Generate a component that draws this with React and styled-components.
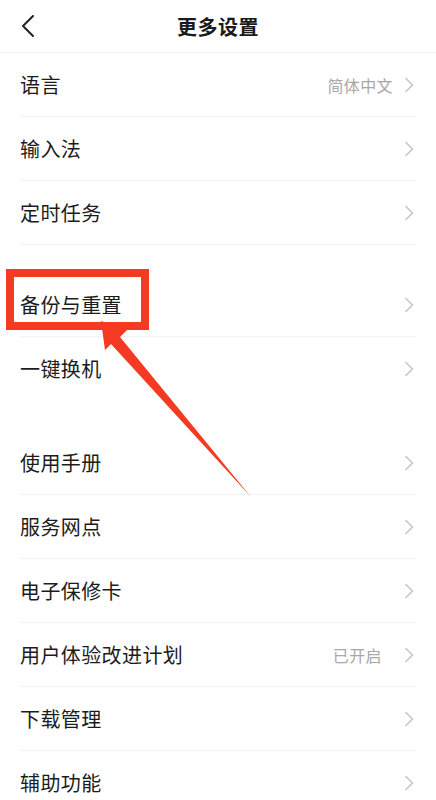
import React from 'react';
import styled, {createGlobalStyle} from "styled-components";

const GlobalStyle = createGlobalStyle`
  html, body {
    margin: 0;
    padding: 0;
    background: #ffffff;
  }
  body {
    font-family: "Noto Sans CJK SC", "Noto Sans", sans-serif;
    -webkit-font-smoothing: antialiased;
  }
`

const groups = [
    [
        {label: '语言', value: '简体中文'},
        {label: '输入法'},
        {label: '定时任务'},
    ],
    [
        {label: '备份与重置', marked: true},
        {label: '一键换机', noLine: true},
    ],
    [
        {label: '使用手册'},
        {label: '服务网点'},
        {label: '电子保修卡'},
        {label: '用户体验改进计划', value: '已开启', valueGap: 22},
        {label: '下载管理'},
        {label: '辅助功能', noLine: true},
    ],
]

const App = () => {
    return (
        <>
            <GlobalStyle/>
            <Page>
                <Header>
                    <BackButton aria-label="back">
                        <svg width="14" height="24" viewBox="0 0 14 24">
                            <path d="M12 2 L2 12 L12 22" fill="none" stroke="#222" strokeWidth="2" strokeLinecap="round" strokeLinejoin="round"/>
                        </svg>
                    </BackButton>
                    <Title>更多设置</Title>
                </Header>
                {groups.map((group, i) => (
                    <Group key={i}>
                        {group.map((item) => (
                            <SettingRow key={item.label} {...item}/>
                        ))}
                    </Group>
                ))}
                <ArrowLayer width="436" height="800" viewBox="0 0 436 800">
                    <polygon
                        points="101,321 127,330 120,337 251,497 111,344 105,350"
                        fill="#f43a22"
                    />
                </ArrowLayer>
            </Page>
        </>
    );
};

const SettingRow = ({label, value, valueGap, marked, noLine}) => {
    return (
        <Row>
            {marked && <Highlight/>}
            <RowInner $noLine={noLine}>
                <Label>{label}</Label>
                <Right $gap={valueGap}>
                    {value && <Value>{value}</Value>}
                    <svg width="10" height="16" viewBox="0 0 10 16">
                        <path d="M2 1.5 L8.5 8 L2 14.5" fill="none" stroke="#c6c6c6" strokeWidth="1.6" strokeLinecap="round" strokeLinejoin="round"/>
                    </svg>
                </Right>
            </RowInner>
        </Row>
    )
}

const Page = styled.div`
  position: relative;
  width: 436px;
  min-height: 800px;
  background: #fff;
  overflow: hidden;
`
const Header = styled.div`
  position: relative;
  height: 52px;
  display: flex;
  align-items: center;
  justify-content: center;
  border-bottom: 1px solid #f4f4f4;
`
const BackButton = styled.div`
  position: absolute;
  left: 21px;
  top: 14px;
  display: flex;
`
const Title = styled.h1`
  margin: 0;
  font-size: 20px;
  font-weight: 700;
  color: #1a1a1a;
  letter-spacing: 0.5px;
`
const Group = styled.div`
  & + & {
    margin-top: 28px;
  }
  &:last-of-type {
    margin-top: 30px;
  }
`
const Row = styled.div`
  position: relative;
  height: 64px;
  padding: 0 20px;
`
const RowInner = styled.div`
  height: 100%;
  box-sizing: border-box;
  display: flex;
  align-items: center;
  justify-content: space-between;
  border-bottom: 1px solid ${props => props.$noLine ? 'transparent' : '#f3f3f3'};
`
const Label = styled.span`
  font-size: 20px;
  color: #1c1c1c;
  letter-spacing: 0.4px;
`
const Right = styled.div`
  display: flex;
  align-items: center;
  gap: ${props => props.$gap || 11}px;
  margin-right: 2px;
`
const Value = styled.span`
  font-size: 16px;
  color: #a8a8a8;
  letter-spacing: 0.4px;
`
const Highlight = styled.div`
  position: absolute;
  left: 6px;
  top: -4px;
  width: 143px;
  height: 61px;
  box-sizing: border-box;
  border: 8px solid #f43a22;
`
const ArrowLayer = styled.svg`
  position: absolute;
  left: 0;
  top: 0;
  pointer-events: none;
`

export default App;
